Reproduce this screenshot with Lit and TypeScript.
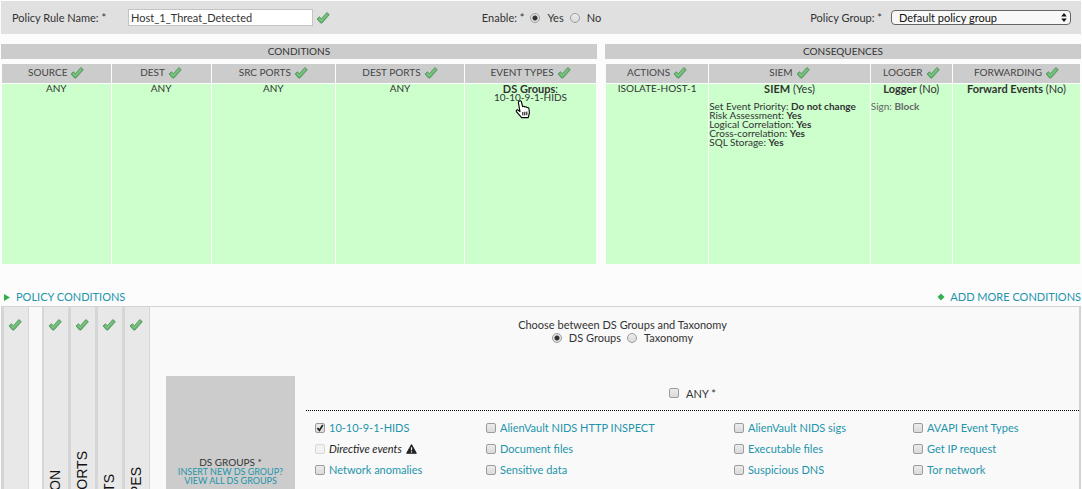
import { LitElement, html, css } from "lit";
import { customElement } from "lit/decorators.js";

const tick = html`<svg class="tick" viewBox="0 0 16 16" aria-hidden="true">
  <path d="M1.2 9 L3.8 6.6 L6.2 8.8 L12.4 1.8 L15.2 4.2 L6.8 13.8 L5.2 13.8 Z" fill="#62b56c" stroke="#5a9464" stroke-width="1" stroke-linejoin="round"/>
  <path d="M3.6 8.6 L6.2 11 L13 3.6" fill="none" stroke="#7cc884" stroke-width="1.4"/>
</svg>`;

const warning = html`<svg class="warning" viewBox="0 0 12 11" aria-hidden="true">
  <path d="M6 .8 L11.2 10.2 H.8 Z" fill="#222" stroke="#222" stroke-width="1.2" stroke-linejoin="round"/>
  <path d="M6 3.6 V6.8 M6 8 V9.4" stroke="#f9f9f9" stroke-width="1.3"/>
</svg>`;

const conditions = ["SOURCE", "DEST", "SRC PORTS", "DEST PORTS", "EVENT TYPES"];
const tabs = ["SOURCE", "DESTINATION", "SOURCE PORTS", "DEST PORTS", "EVENT TYPES"];
const siem = [
  ["Set Event Priority", "Do not change"],
  ["Risk Assessment", "Yes"],
  ["Logical Correlation", "Yes"],
  ["Cross-correlation", "Yes"],
  ["SQL Storage", "Yes"],
];
const groups = [
  "10-10-9-1-HIDS", "AlienVault NIDS HTTP INSPECT", "AlienVault NIDS sigs", "AVAPI Event Types",
  "Directive events", "Document files", "Executable files", "Get IP request",
  "Network anomalies", "Sensitive data", "Suspicious DNS", "Tor network",
];

@customElement("app-root")
export class AppRoot extends LitElement {
  static styles = css`
    :host {
      display: block;
      box-sizing: border-box;
      height: 100vh;
      overflow: hidden;
      padding: 1px 1px 0;
      background: #fcfcfc;
      color: #333;
      font: 11px/13px Lato, "Open Sans", sans-serif;
    }
    * { box-sizing: border-box; }
    a { color: #2394ab; text-decoration: none; }
    .tick { width: 14px; height: 14px; flex: none; }
    .bar {
      display: grid;
      grid-template-columns: 1fr 1fr 1fr;
      align-items: center;
      height: 33px;
      padding: 0 10px 0 11px;
      background: #e0e0e0;
    }
    .field { display: flex; align-items: center; }
    .field.mid { justify-content: center; }
    .field.end { justify-content: flex-end; }
    .name {
      width: 185px;
      height: 17px;
      margin: 0 3px 0 22px;
      padding: 0 2px;
      border: 1px solid #c4c4c4;
      background: #fff;
      color: #333;
      font: inherit;
    }
    .group {
      appearance: none;
      width: 180px;
      height: 15px;
      padding: 0 7px;
      border: 1px solid #666;
      border-radius: 4px;
      background: #f8f8f8;
      color: #111;
      font: inherit;
    }
    .pick { position: relative; display: flex; margin-left: 9px; }
    .arrows { position: absolute; right: 4px; top: 3px; width: 6px; height: 9px; pointer-events: none; }
    input[type="radio"], input[type="checkbox"] {
      appearance: none;
      flex: none;
      width: 10px;
      height: 10px;
      margin: 0;
      border: 1px solid #9c9c9c;
      background: linear-gradient(#ececec, #dadada);
    }
    input[type="radio"] { border-radius: 50%; }
    input[type="radio"]:checked { background: radial-gradient(circle, #333 0 2px, #e4e4e4 3px); }
    input[type="checkbox"] { border-radius: 2px; }
    input[type="checkbox"]:disabled { border-color: #d8d8d8; background: #f2f2f2; }
    .mark { position: relative; display: flex; }
    .mark svg { position: absolute; inset: 0; width: 10px; height: 10px; pointer-events: none; }
    .choice { display: flex; align-items: center; gap: 7px; }
    .radios { display: flex; align-items: center; gap: 6px; }
    .mid .radios { margin-left: 6px; }

    .tables { display: grid; grid-template-columns: 596fr 476fr; gap: 8px; margin-top: 10px; }
    .title {
      margin: 0;
      height: 15px;
      background: #ccc;
      text-align: center;
      font-size: 10px;
      line-height: 15px;
      font-weight: 400;
      color: #333;
    }
    table { width: 100%; margin-top: 4px; border-spacing: 1px; table-layout: fixed; }
    th { height: 19px; padding: 0 0 2px; background: #ccc; color: #444; font-size: 10px; font-weight: 400; }
    .head { display: flex; justify-content: center; align-items: center; gap: 3px; }
    td {
      height: 180px;
      padding: 0;
      background: #cfc;
      vertical-align: top;
      text-align: center;
      font-size: 10px;
      line-height: 9px;
    }
    .plain { margin: 0; }
    .lead { margin: 0; font-size: 11px; }
    .details { margin: 9px 0 0; text-align: left; }
    .muted { color: #666; }
    .events { position: relative; }
    .hand { position: absolute; left: 50px; top: 16px; width: 16px; height: 19px; }

    .links {
      display: flex;
      justify-content: space-between;
      margin: 24px 0 1px;
      padding-left: 2px;
      font-size: 11px;
      line-height: 16px;
    }
    .links a { display: flex; align-items: center; gap: 5px; }
    .links svg { width: 8px; height: 8px; }
    .panel {
      display: flex;
      border: solid #d3d3d3;
      border-width: 1px 2px 1px 1px;
      background: #f9f9f9;
    }
    .tabs { display: flex; flex: none; margin-right: 16px; }
    .tab {
      display: flex;
      flex-direction: column;
      align-items: center;
      justify-content: space-between;
      width: 27px;
      height: 256px;
      padding: 11px 2px 0 0;
      border: solid #d6d6d6;
      border-width: 0 1px 0 2px;
      background: #e8e8e8;
      color: #111;
      font: 14px/16px "Liberation Sans", Arial, sans-serif;
    }
    .tab:first-child { margin-right: 13px; }
    .tab span { writing-mode: vertical-rl; transform: rotate(180deg); }
    .body { flex: 1; min-width: 0; }
    .chooser { display: flex; flex-direction: column; align-items: center; margin-top: 11px; }
    .chosen { display: flex; gap: 11px; margin-top: 32px; }
    .aside {
      display: flex;
      flex-direction: column;
      align-items: center;
      flex: none;
      width: 129px;
      height: 186px;
      padding-top: 82px;
      background: #ccc;
      font-size: 9px;
      line-height: 9px;
    }
    .aside label { font-size: 10px; color: #333; }
    .list { flex: 1; min-width: 0; }
    .any { display: flex; justify-content: center; align-items: center; height: 35px; border-bottom: 1px dotted #000; }
    .grid {
      display: grid;
      grid-template-columns: 171fr 248fr 179fr 166fr;
      row-gap: 8px;
      padding: 10px 0 0 9px;
    }
    .item { display: flex; align-items: center; gap: 4px; }
    .dark { color: #222; font-style: italic; }
    .warning { width: 11px; height: 10px; }
  `;

  private radio(group: string, text: string, on: boolean) {
    return html`<label class="choice"><input type="radio" name=${group} ?checked=${on} />${text}</label>`;
  }

  private head(text: string) {
    return html`<th scope="col"><span class="head">${text}${tick}</span></th>`;
  }

  private item(text: string, i: number) {
    const off = text === "Directive events";
    return html`<div class="item">
      <span class="mark">
        <input type="checkbox" id="g${i}" aria-label=${text} ?checked=${i === 0} ?disabled=${off} />
        ${i === 0 ? html`<svg viewBox="0 0 10 10"><path d="M2.4 5 L4.4 7.4 L7.8 2" fill="none" stroke="#222" stroke-width="1.7"/></svg>` : ""}
      </span>
      ${off ? html`<label class="dark" for="g${i}">${text}</label>${warning}` : html`<a href="#">${text}</a>`}
    </div>`;
  }

  render() {
    return html`
      <div class="bar">
        <div class="field"><label for="name">Policy Rule Name: *</label>
          <input class="name" id="name" type="text" value="Host_1_Threat_Detected" />${tick}</div>
        <div class="field mid"><span>Enable: *</span>
          <div class="radios">${this.radio("enable", "Yes", true)}${this.radio("enable", "No", false)}</div></div>
        <div class="field end"><label for="group">Policy Group: *</label>
          <span class="pick"><select class="group" id="group"><option>Default policy group</option></select>
            <svg class="arrows" viewBox="0 0 6 9"><path d="M3 0 L5.8 3.6 H.2 Z M3 9 L5.8 5.4 H.2 Z" fill="#111"/></svg></span></div>
      </div>

      <div class="tables">
        <section>
          <h2 class="title">CONDITIONS</h2>
          <table>
            <colgroup><col width="18.4%" /><col width="16.8%" /><col width="20.9%" /><col width="21.7%" /><col /></colgroup>
            <thead><tr>${conditions.map((c) => this.head(c))}</tr></thead>
            <tbody><tr>
              ${[0, 1, 2, 3].map(() => html`<td><p class="plain">ANY</p></td>`)}
              <td><div class="events"><p class="lead"><b>DS Groups</b>:</p>10-10-9-1-HIDS
                <svg class="hand" viewBox="0 0 16 19"><path d="M4.5 1 Q6 .4 6.5 2 L7.6 6.6 Q9 5.6 9.8 7 Q11.4 6.2 12 7.6 Q13.8 7.2 14 9 L14.4 13 L13.2 17.6 H6.6 L1.4 11.6 Q.8 9.8 2.6 9.8 L5 11.6 L3.4 2.6 Q3.4 1.4 4.5 1 Z" fill="#fff" stroke="#000" stroke-width="1.1" stroke-linejoin="round"/><path d="M7.8 12 V15.4 M9.8 11.8 V15.4 M11.8 11.6 V15.2" stroke="#000"/></svg>
              </div></td>
            </tr></tbody>
          </table>
        </section>
        <section>
          <h2 class="title">CONSEQUENCES</h2>
          <table>
            <colgroup><col width="21.7%" /><col width="34.1%" /><col width="17.2%" /><col /></colgroup>
            <thead><tr>${["ACTIONS", "SIEM", "LOGGER", "FORWARDING"].map((c) => this.head(c))}</tr></thead>
            <tbody><tr>
              <td><p class="plain">ISOLATE-HOST-1</p></td>
              <td><p class="lead"><b>SIEM</b> (Yes)</p>
                <div class="details">${siem.map(([k, v]) => html`<div>${k}: <b>${v}</b></div>`)}</div></td>
              <td><p class="lead"><b>Logger</b> (No)</p>
                <div class="details muted">Sign: <b>Block</b></div></td>
              <td><p class="lead"><b>Forward Events</b> (No)</p></td>
            </tr></tbody>
          </table>
        </section>
      </div>

      <nav class="links">
        <a href="#"><svg viewBox="0 0 8 8"><path d="M1 1 L7 4.4 L1 8 Z" fill="#2fae4a"/></svg>POLICY CONDITIONS</a>
        <a href="#"><svg viewBox="0 0 8 8"><path d="M4 .5 L7.5 4 L4 7.5 L.5 4 Z" fill="#35b050"/></svg>ADD MORE CONDITIONS</a>
      </nav>

      <div class="panel">
        <div class="tabs">${tabs.map((t) => html`<button class="tab" type="button">${tick}<span>${t}</span></button>`)}</div>
        <div class="body">
          <div class="chooser"><span>Choose between DS Groups and Taxonomy</span>
            <div class="radios">${this.radio("kind", "DS Groups", true)}${this.radio("kind", "Taxonomy", false)}</div></div>
          <div class="chosen">
            <div class="aside"><label for="any">DS GROUPS *</label><a href="#">INSERT NEW DS GROUP?</a><a href="#">VIEW ALL DS GROUPS</a></div>
            <div class="list">
              <div class="any"><label class="choice"><input type="checkbox" id="any" />ANY *</label></div>
              <div class="grid">${groups.map((g, i) => this.item(g, i))}</div>
            </div>
          </div>
        </div>
      </div>
    `;
  }
}
